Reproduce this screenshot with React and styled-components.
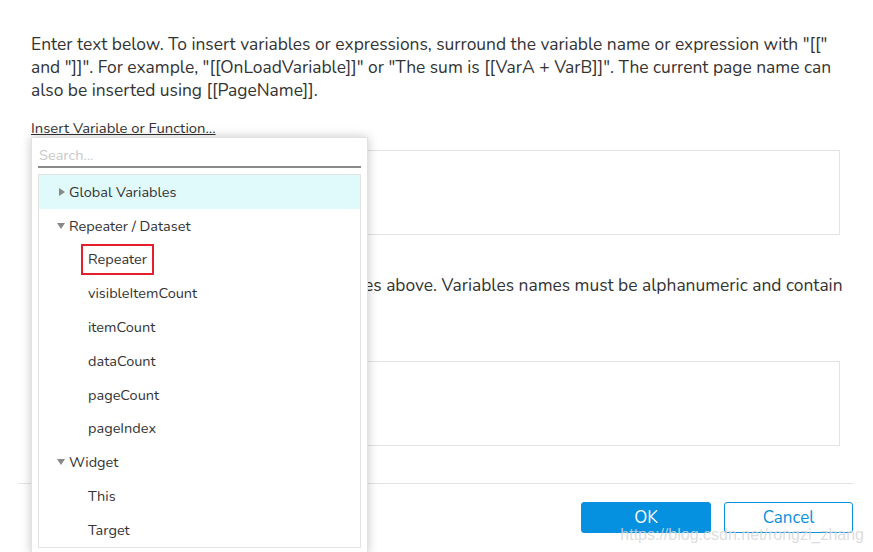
import React from 'react';
import styled, { createGlobalStyle } from 'styled-components';

const GlobalStyle = createGlobalStyle`
  html, body {
    margin: 0;
    padding: 0;
    background: #fff;
    overflow: hidden;
  }
  body {
    font-family: "Nunito", "Lato", "Open Sans", sans-serif;
    color: #333;
  }
`;

const Dialog = styled.div`
  position: relative;
  width: 873px;
  height: 552px;
  padding: 33px 20px 0 18px;
  box-sizing: border-box;
`;

const Body = styled.div`
  padding: 0 13px;
`;

const Text = styled.p`
  margin: ${({ $top }) => $top || 0}px 0 0;
  font-size: 17.4px;
  line-height: 23px;
  color: #333;
  white-space: nowrap;
`;

const LinkWrap = styled.div`
  position: relative;
  margin-top: ${({ $top }) => $top}px;
  height: 20px;
`;

const Link = styled.a`
  font-size: 14.8px;
  line-height: 20px;
  color: #333;
  text-decoration: underline;
  cursor: pointer;
`;

const TextBox = styled.div`
  margin-top: 13px;
  height: 85px;
  border: 1px solid #e3e3e3;
  box-sizing: border-box;
`;

const Footer = styled.div`
  margin-top: 37px;
  border-top: 1px solid #e3e3e3;
  padding-top: 18px;
  display: flex;
  justify-content: flex-end;
  gap: 13px;
`;

const Button = styled.button`
  width: ${({ $w }) => $w}px;
  height: 31px;
  border-radius: 3px;
  font-family: inherit;
  font-size: 17px;
  border: 1px solid #0b8fe0;
  background: ${({ $primary }) => ($primary ? '#0590e0' : '#fff')};
  color: ${({ $primary }) => ($primary ? '#fff' : '#0b8fe0')};
  padding: 0;
`;

const Popup = styled.div`
  position: absolute;
  top: 100%;
  left: 0;
  width: 337px;
  padding: 6px 6px 6px;
  box-sizing: border-box;
  background: #fff;
  border: 1px solid #e2e2e2;
  box-shadow: 0 0 10px rgba(0, 0, 0, 0.22);
  z-index: 5;
`;

const Search = styled.input`
  display: block;
  width: 100%;
  height: 24px;
  box-sizing: border-box;
  border: none;
  border-bottom: 2px solid #8a8a8a;
  outline: none;
  padding: 0 1px;
  font-family: inherit;
  font-size: 14.5px;
  color: #333;
  &::placeholder {
    color: #c9c9c9;
  }
`;

const Tree = styled.div`
  margin-top: 6px;
  border: 1px solid #e3e3e3;
`;

const Row = styled.div`
  display: flex;
  align-items: center;
  height: 33.8px;
  padding-left: ${({ $level }) => ($level ? 49 : 20)}px;
  background: ${({ $active }) => ($active ? '#e0f9fa' : '#fff')};
  font-size: 14.5px;
  color: #333;
`;

const Caret = styled.span`
  width: 0;
  height: 0;
  margin-right: 5px;
  ${({ $open }) =>
    $open
      ? `border-left: 4px solid transparent;
         border-right: 4px solid transparent;
         border-top: 6px solid #888;
         margin-left: -2px;
         margin-right: 4px;`
      : `border-top: 4px solid transparent;
         border-bottom: 4px solid transparent;
         border-left: 6px solid #888;
         margin-right: 4px;`}
`;

const Marked = styled.span`
  margin-left: -7px;
  padding: 0 5px;
  line-height: 27px;
  border: 2px solid #e41e2b;
`;

const Watermark = styled.div`
  position: absolute;
  right: 9px;
  bottom: 8px;
  font-family: "Liberation Sans", Arial, sans-serif;
  font-size: 16px;
  color: rgba(215, 215, 215, 0.85);
  pointer-events: none;
`;

const items = [
  { label: 'Global Variables', level: 0, active: true },
  { label: 'Repeater / Dataset', level: 0, open: true },
  { label: 'Repeater', level: 1, marked: true },
  { label: 'visibleItemCount', level: 1 },
  { label: 'itemCount', level: 1 },
  { label: 'dataCount', level: 1 },
  { label: 'pageCount', level: 1 },
  { label: 'pageIndex', level: 1 },
  { label: 'Widget', level: 0, open: true },
  { label: 'This', level: 1 },
  { label: 'Target', level: 1 },
];

export default function App() {
  return (
    <>
      <GlobalStyle />
      <Dialog>
        <Body>
          <Text>
            Enter text below. To insert variables or expressions, surround the variable name or expression with "[["
            <br />
            and "]]". For example, "[[OnLoadVariable]]" or "The sum is [[VarA + VarB]]". The current page name can
            <br />
            also be inserted using [[PageName]].
          </Text>
          <LinkWrap $top={15}>
            <Link>Insert Variable or Function...</Link>
            <Popup>
              <Search placeholder="Search..." />
              <Tree>
                {items.map((it) => (
                  <Row key={it.label} $level={it.level} $active={it.active}>
                    {it.level === 0 && <Caret $open={it.open} />}
                    {it.marked ? <Marked>{it.label}</Marked> : it.label}
                  </Row>
                ))}
              </Tree>
            </Popup>
          </LinkWrap>
          <TextBox />
          <Text $top={39}>
            Create local variables to insert widget values above. Variables names must be alphanumeric and contain
            <br />
            no spaces.
          </Text>
          <LinkWrap $top={8}>
            <Link>Add Local Variable</Link>
          </LinkWrap>
          <TextBox />
        </Body>
        <Footer>
          <Button $primary $w={130}>OK</Button>
          <Button $w={129}>Cancel</Button>
        </Footer>
        <Watermark>https://blog.csdn.net/rongzi_zhang</Watermark>
      </Dialog>
    </>
  );
}
